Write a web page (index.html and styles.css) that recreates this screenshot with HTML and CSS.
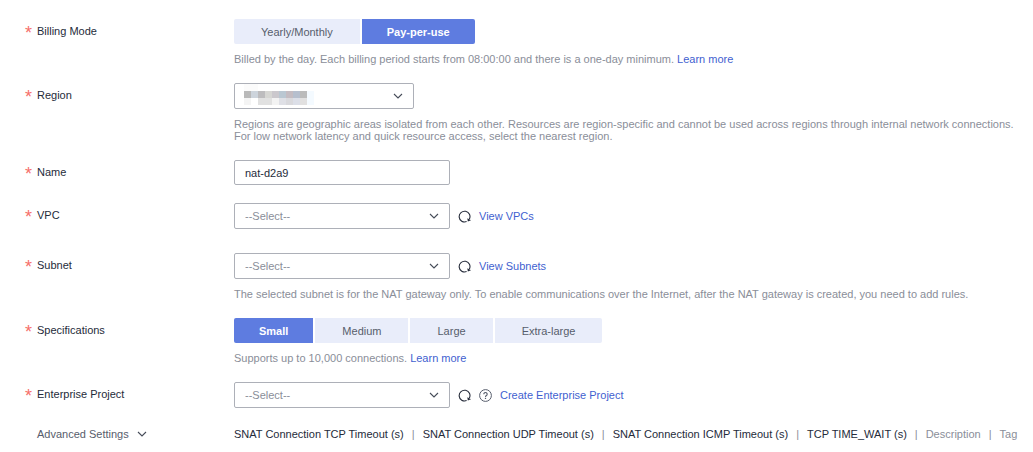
FILE: index.html
```
<!DOCTYPE html>
<html lang="en">
<head>
  <meta charset="utf-8">
  <title>Buy NAT Gateway</title>
  <link rel="stylesheet" href="styles.css">
</head>
<body>
  <!-- Shared icons -->
  <svg class="sprite" aria-hidden="true">
    <symbol id="icon-chevron" viewBox="0 0 10 6">
      <path d="M1 1l4 4 4-4" fill="none" stroke="currentColor" stroke-width="1.1"/>
    </symbol>
    <symbol id="icon-refresh" viewBox="0 0 13 13">
      <path d="M8.6 11.6A5.4 5.4 0 1 1 11.3 9.2" fill="none" stroke="currentColor" stroke-width="1.1"/>
      <path d="M9.3 8.2l3.7 2-3.2 1.4z" fill="currentColor"/>
    </symbol>
    <symbol id="icon-help" viewBox="0 0 13 13">
      <circle cx="6.5" cy="6.5" r="5.9" fill="none" stroke="currentColor"/>
      <path d="M4.8 5.2a1.7 1.7 0 1 1 2.6 1.4q-.9.5-.9 1.3" fill="none" stroke="currentColor" stroke-width="1.1"/>
      <path d="M6.5 8.8v1.2" stroke="currentColor" stroke-width="1.2"/>
    </symbol>
  </svg>

  <form class="form">
    <!-- Billing mode -->
    <div class="row">
      <span class="label required" id="billing-label">Billing Mode</span>
      <div class="field">
        <div class="segments" role="group" aria-labelledby="billing-label">
          <button type="button" class="segment">Yearly/Monthly</button>
          <button type="button" class="segment active" aria-pressed="true">Pay-per-use</button>
        </div>
        <p class="hint">Billed by the day. Each billing period starts from 08:00:00 and there is a one-day minimum. <a href="#">Learn more</a></p>
      </div>
    </div>

    <!-- Region -->
    <div class="row">
      <label class="label required" for="region">Region</label>
      <div class="field">
        <div class="select select-small">
          <select id="region"><option></option></select>
          <svg class="masked" viewBox="0 0 70 21" shape-rendering="crispEdges" aria-hidden="true">
            <path fill="#fbfbfb" d="M0 0h14v7H0z"/>
            <path fill="#b9b9b9" d="M0 7h7v7H0z"/>
            <path fill="#cdd4dc" d="M7 7h7v7H7z"/>
            <path fill="#bdbcbe" d="M14 7h7v7h-7z"/>
            <path fill="#d6d6d3" d="M21 7h7v7h-7z"/>
            <path fill="#cbc8cd" d="M28 7h7v7h-7z"/>
            <path fill="#bac7d2" d="M35 7h7v7h-7z"/>
            <path fill="#c4bcc2" d="M42 7h7v7h-7z"/>
            <path fill="#b6bfce" d="M49 7h7v7h-7z"/>
            <path fill="#bbb" d="M56 7h7v7h-7z"/>
            <path fill="#f4faff" d="M63 7h7v14h-7z"/>
            <path fill="#f4f4f4" d="M0 14h7v7H0z"/>
            <path fill="#e1e1e1" d="M14 14h14v7H14z"/>
            <path fill="#f3f3f3" d="M28 14h7v7h-7z"/>
            <path fill="#dfe0e6" d="M35 14h7v7h-7z"/>
            <path fill="#d9d9dd" d="M42 14h7v7h-7z"/>
            <path fill="#dcdfe8" d="M49 14h7v7h-7z"/>
            <path fill="#e1e0e0" d="M56 14h7v7h-7z"/>
          </svg>
          <svg class="chevron" aria-hidden="true"><use href="#icon-chevron"/></svg>
        </div>
        <p class="hint">Regions are geographic areas isolated from each other. Resources are region-specific and cannot be used across regions through internal network connections. For low network latency and quick resource access, select the nearest region.</p>
      </div>
    </div>

    <!-- Name -->
    <div class="row">
      <label class="label required" for="name">Name</label>
      <div class="field">
        <input class="input" type="text" id="name" name="name" value="nat-d2a9">
      </div>
    </div>

    <!-- VPC -->
    <div class="row row-vpc">
      <label class="label required" for="vpc">VPC</label>
      <div class="field">
        <div class="controls">
          <div class="select">
            <select id="vpc"><option>--Select--</option></select>
            <svg class="chevron" aria-hidden="true"><use href="#icon-chevron"/></svg>
          </div>
          <button type="button" class="icon-button" aria-label="Refresh VPCs"><svg class="icon"><use href="#icon-refresh"/></svg></button>
          <a href="#">View VPCs</a>
        </div>
      </div>
    </div>

    <!-- Subnet -->
    <div class="row">
      <label class="label required" for="subnet">Subnet</label>
      <div class="field">
        <div class="controls">
          <div class="select">
            <select id="subnet"><option>--Select--</option></select>
            <svg class="chevron" aria-hidden="true"><use href="#icon-chevron"/></svg>
          </div>
          <button type="button" class="icon-button" aria-label="Refresh subnets"><svg class="icon"><use href="#icon-refresh"/></svg></button>
          <a href="#">View Subnets</a>
        </div>
        <p class="hint">The selected subnet is for the NAT gateway only. To enable communications over the Internet, after the NAT gateway is created, you need to add rules.</p>
      </div>
    </div>

    <!-- Specifications -->
    <div class="row">
      <span class="label required" id="spec-label">Specifications</span>
      <div class="field">
        <div class="segments" role="group" aria-labelledby="spec-label">
          <button type="button" class="segment active" aria-pressed="true">Small</button>
          <button type="button" class="segment">Medium</button>
          <button type="button" class="segment">Large</button>
          <button type="button" class="segment">Extra-large</button>
        </div>
        <p class="hint">Supports up to 10,000 connections. <a href="#">Learn more</a></p>
      </div>
    </div>

    <!-- Enterprise project -->
    <div class="row">
      <label class="label required" for="project">Enterprise Project</label>
      <div class="field">
        <div class="controls">
          <div class="select">
            <select id="project"><option>--Select--</option></select>
            <svg class="chevron" aria-hidden="true"><use href="#icon-chevron"/></svg>
          </div>
          <button type="button" class="icon-button" aria-label="Refresh projects"><svg class="icon"><use href="#icon-refresh"/></svg></button>
          <button type="button" class="icon-button help" aria-label="Help"><svg class="icon"><use href="#icon-help"/></svg></button>
          <a href="#">Create Enterprise Project</a>
        </div>
      </div>
    </div>

    <!-- Advanced settings -->
    <div class="row row-advanced">
      <button type="button" class="toggle">Advanced Settings <svg class="chevron" aria-hidden="true"><use href="#icon-chevron"/></svg></button>
      <div class="summary">
        <span>SNAT Connection TCP Timeout (s)</span>
        <span class="divider">|</span>
        <span>SNAT Connection UDP Timeout (s)</span>
        <span class="divider">|</span>
        <span>SNAT Connection ICMP Timeout (s)</span>
        <span class="divider">|</span>
        <span>TCP TIME_WAIT (s)</span>
        <span class="divider">|</span>
        <span class="muted">Description</span>
        <span class="divider">|</span>
        <span class="muted">Tag</span>
      </div>
    </div>
  </form>
</body>
</html>
```
FILE: styles.css
```
* {
  box-sizing: border-box;
}

body {
  margin: 0;
  background: #fff;
  color: #252b3a;
  font-family: "Liberation Sans", Arial, sans-serif;
  font-size: 11px;
  line-height: 12px;
}

button,
input,
select {
  font: inherit;
  color: inherit;
}

a {
  color: #3f5fd0;
  text-decoration: none;
}

.sprite {
  display: none;
}

/* Form rows: label on the left, field on the right */
.form {
  display: flex;
  flex-direction: column;
  gap: 18px;
  padding: 19px 12px 12px 25px;
}

.row {
  display: grid;
  grid-template-columns: 209px 1fr;
}

.row-vpc {
  margin-bottom: 6px;
}

.row-advanced {
  margin-top: 2px;
}

.label {
  line-height: 25px;
}

/* Red star in front of mandatory fields */
.required {
  display: flex;
}

.required::before {
  content: "*";
  width: 12px;
  height: 25px;
  color: #f66f6a;
  font-size: 18px;
  line-height: 28px;
}

.hint {
  margin: 9px 0 0;
  color: #8a8e99;
}

.controls {
  display: flex;
  align-items: center;
  gap: 8px;
}

/* Button groups */
.segments {
  display: flex;
  gap: 2px;
}

.segment {
  height: 25px;
  padding: 0 27px;
  border: none;
  background: #e9edfa;
  color: #575d6c;
  cursor: pointer;
}

.segment:first-child {
  border-radius: 2px 0 0 2px;
}

.segment:last-child {
  border-radius: 0 2px 2px 0;
}

.segment.active {
  padding: 0 25px;
  background: #5e7ce0;
  color: #fff;
  font-weight: bold;
}

/* Text box and drop-downs */
.input,
.select select {
  width: 100%;
  border: 1px solid #adb0b8;
  border-radius: 2px;
  padding: 0 10px;
  background: #fff;
}

.input {
  display: block;
  max-width: 216px;
  height: 25px;
}

.select {
  display: grid;
  align-items: center;
  width: 216px;
}

.select-small {
  width: 180px;
}

.select > * {
  grid-area: 1 / 1;
}

.select select {
  height: 26px;
  appearance: none;
  color: #8a8e99;
}

.select .chevron {
  justify-self: end;
  margin-right: 11px;
  pointer-events: none;
}

.chevron {
  width: 10px;
  height: 6px;
  color: #464c59;
}

.masked {
  width: 70px;
  height: 21px;
  margin-left: 10px;
  margin-bottom: 4px;
  pointer-events: none;
}

.icon-button {
  display: flex;
  padding: 0;
  border: none;
  background: none;
  color: #252b3a;
  cursor: pointer;
}

.help {
  color: #575d6c;
}

.icon {
  width: 13px;
  height: 13px;
}

/* Advanced settings */
.toggle {
  display: flex;
  align-items: center;
  gap: 8px;
  padding: 0 0 0 12px;
  border: none;
  background: none;
  color: #575d6c;
  cursor: pointer;
}

.summary {
  display: flex;
  flex-wrap: wrap;
  column-gap: 8px;
}

.divider,
.muted {
  color: #8a8e99;
}
```
